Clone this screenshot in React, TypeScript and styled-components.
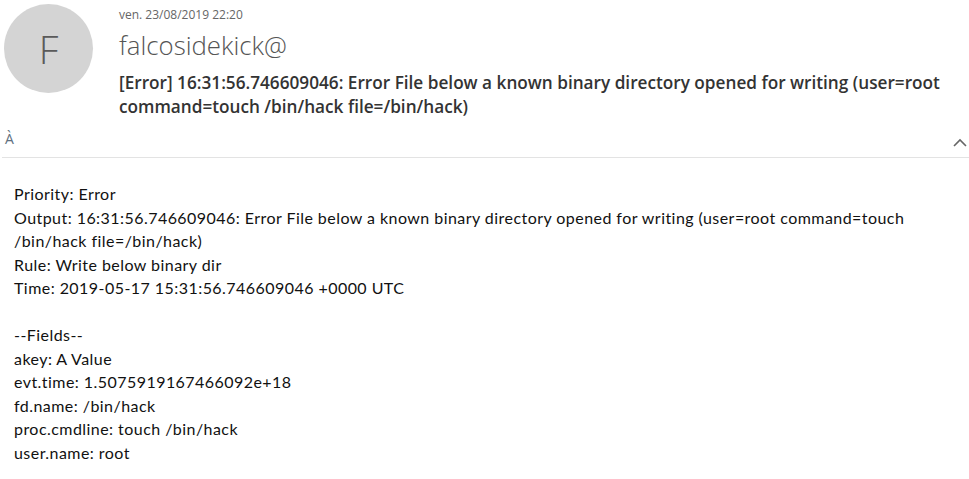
import React from 'react'
import styled, { createGlobalStyle } from 'styled-components'

const GlobalStyle = createGlobalStyle`
  html, body {
    margin: 0;
    padding: 0;
    background: #ffffff;
  }
`

const Page = styled.div`
  width: 969px;
  height: 479px;
  overflow: hidden;
  background: #fff;
  font-family: 'Open Sans', 'Noto Sans', sans-serif;
`

const Header = styled.div`
  display: flex;
  align-items: flex-start;
  padding: 4px 0 0 4px;
  gap: 26px;
`

const Avatar = styled.div`
  width: 89px;
  height: 89px;
  border-radius: 50%;
  background: #d4d4d4;
  color: #5a5a5a;
  display: flex;
  align-items: center;
  justify-content: center;
  font-size: 39px;
  font-weight: 300;
  flex-shrink: 0;
`

const Meta = styled.div`
  display: flex;
  flex-direction: column;
  padding-top: 3px;
  padding-right: 20px;
`

const Date = styled.div`
  font-size: 12px;
  color: #666;
  line-height: 16px;
`

const Sender = styled.div`
  font-size: 25.8px;
  font-weight: 300;
  color: #555;
  line-height: 36px;
  margin-top: 4px;
`

const Subject = styled.div`
  font-size: 17.2px;
  font-weight: 600;
  color: #333;
  line-height: 24px;
  margin-top: 8px;
`

const ToRow = styled.div`
  display: flex;
  justify-content: space-between;
  align-items: center;
  margin: 8px 0 0 2px;
  padding: 0 2px 8px 3px;
  border-bottom: 1px solid #e3e3e3;
  height: 22px;
`

const ToLabel = styled.span`
  font-size: 14px;
  color: #5f7080;
`

const Collapse = styled.svg`
  width: 14px;
  height: 10px;
  margin-top: 10px;
`

const Body = styled.div`
  padding: 24px 0 0 14px;
  font-family: 'Lato', 'Liberation Sans', sans-serif;
  font-size: 16px;
  letter-spacing: 0.45px;
  color: #111;
  line-height: 23.5px;
`

const Line = styled.div<{ $gap?: boolean }>`
  margin-top: ${({ $gap }) => ($gap ? '23.5px' : '0')};
  white-space: nowrap;
`

const body = [
  'Priority: Error',
  'Output: 16:31:56.746609046: Error File below a known binary directory opened for writing (user=root command=touch',
  '/bin/hack file=/bin/hack)',
  'Rule: Write below binary dir',
  'Time: 2019-05-17 15:31:56.746609046 +0000 UTC',
]

const fields = [
  '--Fields--',
  'akey: A Value',
  'evt.time: 1.5075919167466092e+18',
  'fd.name: /bin/hack',
  'proc.cmdline: touch /bin/hack',
  'user.name: root',
]

export default function App() {
  return (
    <Page>
      <GlobalStyle />
      <Header>
        <Avatar>F</Avatar>
        <Meta>
          <Date>ven. 23/08/2019 22:20</Date>
          <Sender>falcosidekick@</Sender>
          <Subject>
            [Error] 16:31:56.746609046: Error File below a known binary directory opened for writing (user=root
            command=touch /bin/hack file=/bin/hack)
          </Subject>
        </Meta>
      </Header>
      <ToRow>
        <ToLabel>À</ToLabel>
        <Collapse viewBox="0 0 14 10">
          <path d="M1 8 L7 2 L13 8" fill="none" stroke="#666" strokeWidth="1.6" />
        </Collapse>
      </ToRow>
      <Body>
        {body.map((l) => (
          <Line key={l}>{l}</Line>
        ))}
        {fields.map((l, i) => (
          <Line key={l} $gap={i === 0}>
            {l}
          </Line>
        ))}
      </Body>
    </Page>
  )
}
